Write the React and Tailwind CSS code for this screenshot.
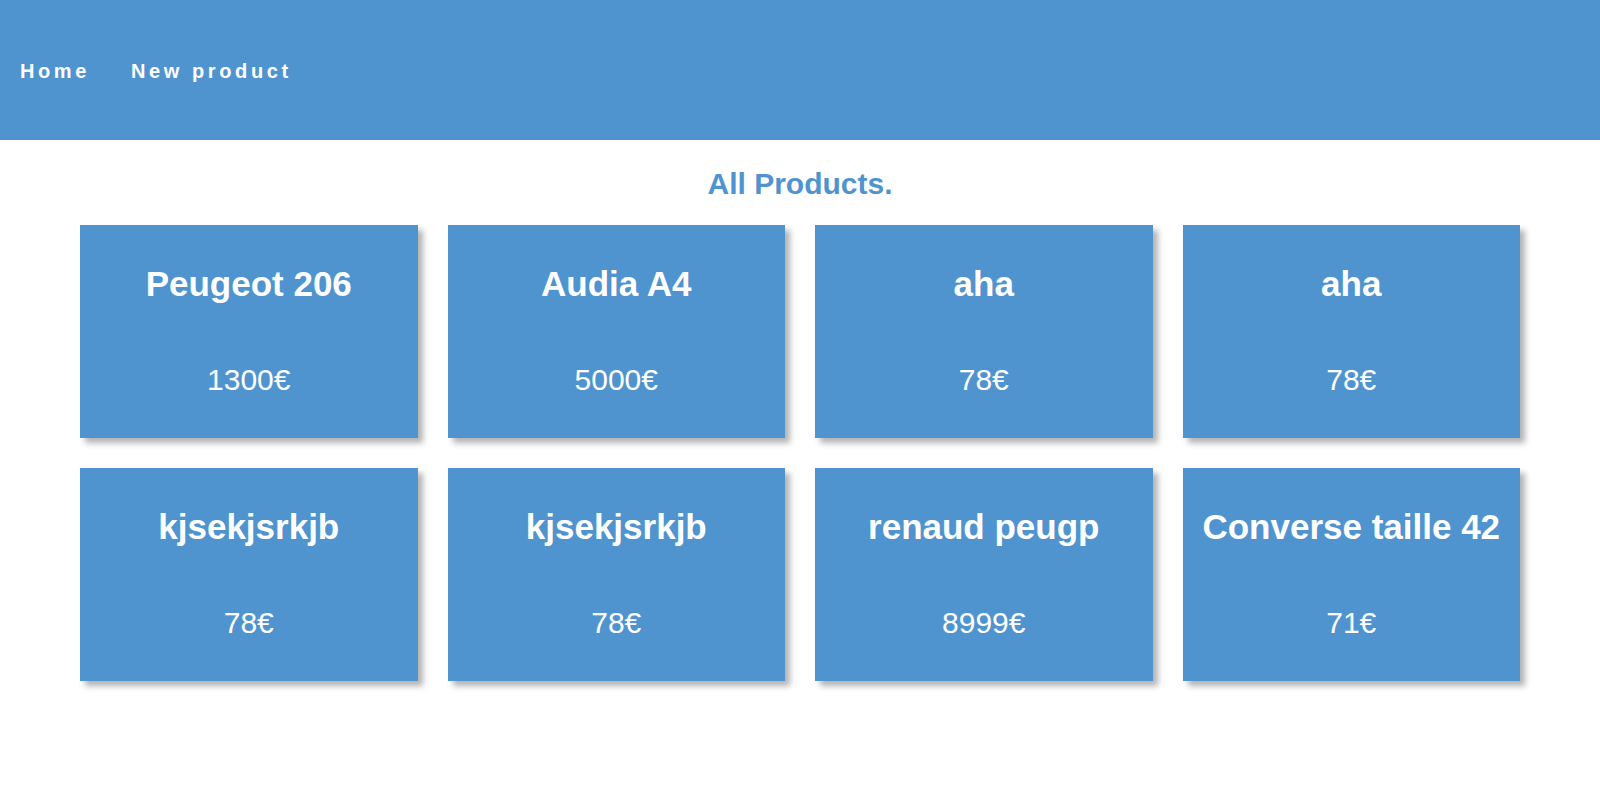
// App.jsx
import React from "react";

const products = [
  { name: "Peugeot 206", price: 1300 },
  { name: "Audia A4", price: 5000 },
  { name: "aha", price: 78 },
  { name: "aha", price: 78 },
  { name: "kjsekjsrkjb", price: 78 },
  { name: "kjsekjsrkjb", price: 78 },
  { name: "renaud peugp", price: 8999 },
  { name: "Converse taille 42", price: 71 },
];

function ProductCard({ product }) {
  return (
    <div className="flex h-[213px] flex-col items-center bg-[#4f94cf] pt-[39px] text-white shadow-[5px_5px_6px_rgba(0,0,0,0.3)]">
      <h2 className="text-[35px] font-bold leading-[40px]">{product.name}</h2>
      <p className="mt-[59px] text-[30px] leading-[34px]">{product.price}€</p>
    </div>
  );
}

export default function App() {
  return (
    <div className="min-h-screen bg-white font-['Liberation_Sans',Arial,sans-serif]">
      {/* Top nav bar */}
      <header className="flex h-[140px] items-center bg-[#4f94cf] px-[20px] pt-[1px]">
        <nav className="flex gap-[41px] text-[20px] font-bold tracking-[3.6px] text-white">
          <a href="#">Home</a>
          <a href="#">New product</a>
        </nav>
      </header>

      <main className="pb-10">
        <h1 className="mt-[27px] text-center text-[30px] font-bold leading-[34px] text-[#4f94cf]">
          All Products.
        </h1>
        <div className="ml-[80px] mt-[24px] grid w-[1440px] grid-cols-4 gap-[30px]">
          {products.map((p, i) => (
            <ProductCard key={i} product={p} />
          ))}
        </div>
      </main>
    </div>
  );
}
